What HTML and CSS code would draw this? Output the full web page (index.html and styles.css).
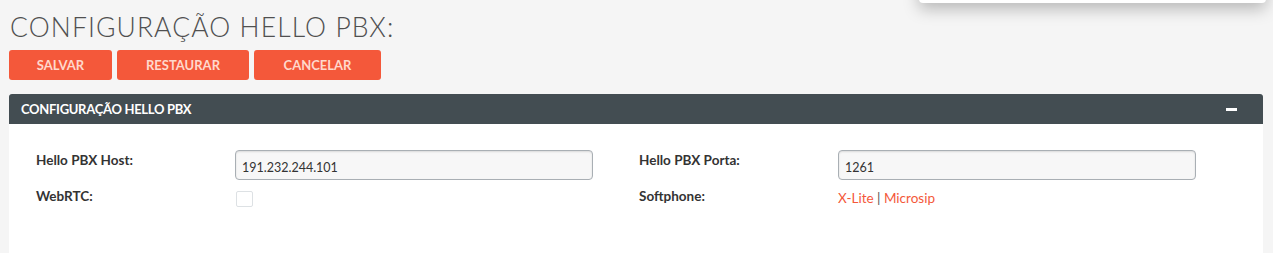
FILE: index.html
```html
<!DOCTYPE html>
<html>

<head>
    <title>Configuração Hello PBX</title>
    <link rel="stylesheet" href="styles.css">
</head>

<body>
    <div class="menu-drop"></div>

    <div class="page">
        <h1 class="page-title">CONFIGURAÇÃO HELLO PBX:</h1>

        <div class="actions">
            <button class="btn btn-save">SALVAR</button>
            <button class="btn btn-restore">RESTAURAR</button>
            <button class="btn btn-cancel">CANCELAR</button>
        </div>

        <div class="panel">
            <div class="panel-heading">
                <span class="panel-title">CONFIGURAÇÃO HELLO PBX</span>
                <span class="panel-toggle"></span>
            </div>
            <div class="panel-body">
                <div class="form-row">
                    <div class="field">
                        <label class="field-label">Hello PBX Host:</label>
                        <div class="field-value">
                            <input type="text" class="text-input" value="191.232.244.101">
                        </div>
                    </div>
                    <div class="field">
                        <label class="field-label">Hello PBX Porta:</label>
                        <div class="field-value">
                            <input type="text" class="text-input" value="1261">
                        </div>
                    </div>
                </div>
                <div class="form-row">
                    <div class="field">
                        <label class="field-label">WebRTC:</label>
                        <div class="field-value">
                            <span class="check-box"></span>
                        </div>
                    </div>
                    <div class="field">
                        <label class="field-label">Softphone:</label>
                        <div class="field-value links">
                            <a href="#">X-Lite</a> <span class="sep">|</span> <a href="#">Microsip</a>
                        </div>
                    </div>
                </div>
            </div>
        </div>
    </div>
</body>

</html>
```

FILE: styles.css
```css
body {
    margin: 0;
    font-family: Lato, "Open Sans", sans-serif;
    background-color: #f5f5f5;
    color: #333;
}

.menu-drop {
    position: absolute;
    top: -40px;
    left: 919px;
    width: 347px;
    height: 43px;
    background: #fff;
    border-radius: 0 0 4px 4px;
    box-shadow: 0px 6px 16px rgba(0, 0, 0, 0.25);
}

.page {
    padding: 0 10px 0 9px;
}

.page-title {
    margin: 0;
    padding: 13px 0 0 1px;
    font-size: 26.5px;
    font-weight: 300;
    letter-spacing: 1.1px;
    color: #505050;
    line-height: 28px;
}

.actions {
    display: flex;
    gap: 5px;
    margin-top: 9px;
}

.btn {
    height: 30px;
    padding: 0;
    border: none;
    border-radius: 3px;
    background-color: #f4583a;
    color: #ffd8cc;
    font-family: Lato, sans-serif;
    font-size: 13px;
    font-weight: 700;
    cursor: pointer;
}

.btn-save {
    width: 103px;
}

.btn-restore {
    width: 132px;
}

.btn-cancel {
    width: 127px;
}

.panel {
    margin-top: 14px;
    background: #fff;
    height: 170px;
}

.panel-heading {
    display: flex;
    align-items: center;
    justify-content: space-between;
    height: 30px;
    padding: 0 26px 0 12px;
    background-color: #434d52;
    border-radius: 3px 3px 0 0;
}

.panel-title {
    color: #fff;
    font-size: 13px;
    font-weight: 700;
    letter-spacing: -0.3px;
}

.panel-toggle {
    width: 11px;
    height: 3px;
    background: #fff;
}

.panel-body {
    padding: 26px 0 0 27px;
}

.form-row {
    display: flex;
    margin-bottom: 6px;
}

.field {
    display: flex;
    width: 603px;
}

.field-label {
    width: 199px;
    padding-top: 2px;
    font-size: 13.5px;
    font-weight: 700;
    color: #333;
}

.text-input {
    box-sizing: border-box;
    width: 358px;
    height: 30px;
    padding: 4px 6px 0;
    border: 1px solid #a9afb4;
    border-radius: 4px;
    background: #f7f7f7;
    box-shadow: inset 0 1px 2px rgba(0, 0, 0, 0.12);
    font-family: Lato, sans-serif;
    font-size: 12.5px;
    color: #333;
}

.check-box {
    display: inline-block;
    margin: 5px 0 0 1px;
    width: 15px;
    height: 14px;
    border: 1px solid #dde1e4;
    border-radius: 2px;
    background: #fff;
}

.links {
    padding-top: 4px;
    font-size: 13.5px;
}

.links a {
    color: #f4583a;
    text-decoration: none;
}

.sep {
    color: #555;
}
```
